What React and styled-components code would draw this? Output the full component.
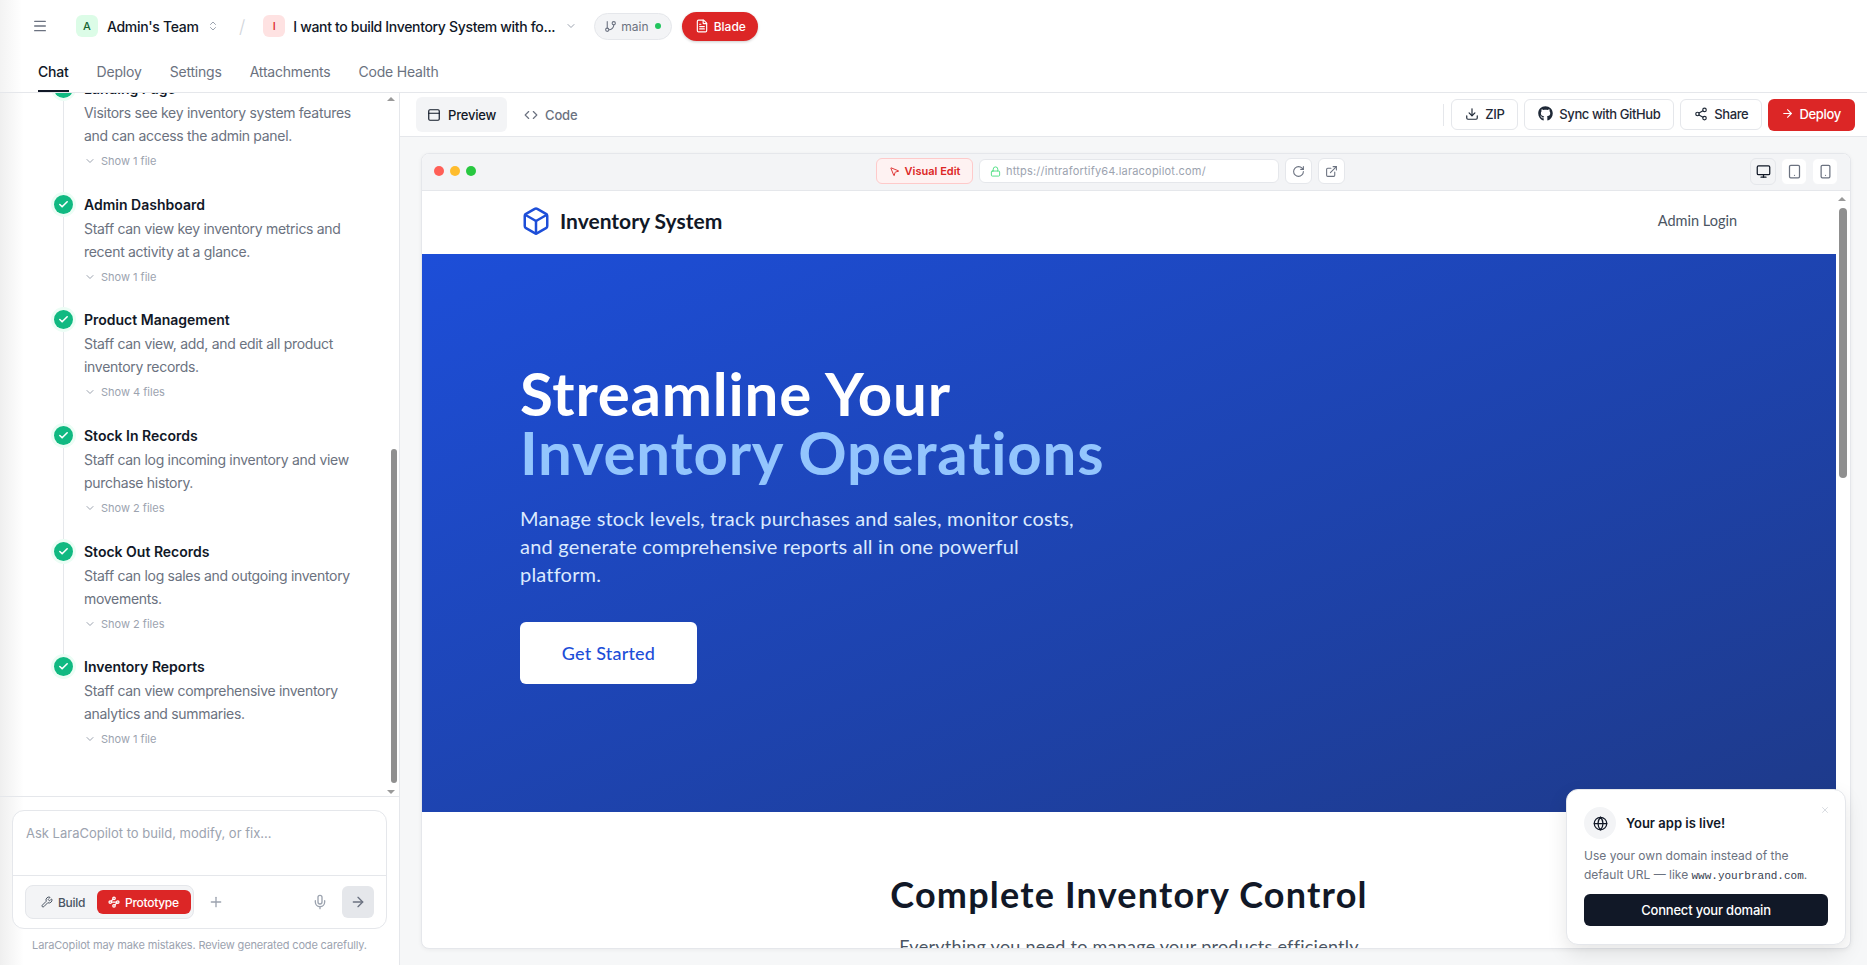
import React from "react";
import styled, { createGlobalStyle } from "styled-components";
import {
  ArrowRight,
  Box,
  Check,
  ChevronDown,
  ChevronsUpDown,
  Code,
  Download,
  ExternalLink,
  FileText,
  GitBranch,
  Globe,
  Lock,
  Menu,
  Mic,
  Monitor,
  MousePointer2,
  PanelTop,
  Plus,
  RotateCw,
  Share2,
  Smartphone,
  Tablet,
  Waypoints,
  Wrench,
  X,
} from "lucide-react";
import { FaGithub } from "react-icons/fa";

const tabs = ["Chat", "Deploy", "Settings", "Attachments", "Code Health"];

const steps = [
  {
    title: "Landing Page",
    text: "Visitors see key inventory system features and can access the admin panel.",
    files: "Show 1 file",
  },
  {
    title: "Admin Dashboard",
    text: "Staff can view key inventory metrics and recent activity at a glance.",
    files: "Show 1 file",
  },
  {
    title: "Product Management",
    text: "Staff can view, add, and edit all product inventory records.",
    files: "Show 4 files",
  },
  {
    title: "Stock In Records",
    text: "Staff can log incoming inventory and view purchase history.",
    files: "Show 2 files",
  },
  {
    title: "Stock Out Records",
    text: "Staff can log sales and outgoing inventory movements.",
    files: "Show 2 files",
  },
  {
    title: "Inventory Reports",
    text: "Staff can view comprehensive inventory analytics and summaries.",
    files: "Show 1 file",
  },
];

const App = () => {
  return (
    <Page>
      <GlobalStyle />
      <TopBar>
        <TopRow>
          <MenuButton>
            <Menu size={16} />
          </MenuButton>
          <Avatar $bg="#dcfce7" $color="#166534">A</Avatar>
          <TeamName>Admin's Team</TeamName>
          <ChevronsUpDown size={12} color="#9ca3af" />
          <Slash>/</Slash>
          <Avatar $bg="#fee2e2" $color="#dc2626">I</Avatar>
          <ProjectName>I want to build Inventory System with fo...</ProjectName>
          <ChevronDown size={12} color="#9ca3af" />
          <BranchPill>
            <GitBranch size={13} />
            main
            <GreenDot />
          </BranchPill>
          <BladePill>
            <FileText size={14} />
            Blade
          </BladePill>
        </TopRow>
        <TabRow>
          {tabs.map((tab, i) => (
            <Tab key={tab} $active={i === 0}>
              {tab}
            </Tab>
          ))}
        </TabRow>
      </TopBar>

      <Main>
        <Sidebar>
          <StepScroll>
            <StepList>
              {steps.map((step, i) => (
                <Step key={step.title} $last={i === steps.length - 1}>
                  <StepDot>
                    <Check size={11} strokeWidth={3.5} color="#fff" />
                  </StepDot>
                  <StepTitle>{step.title}</StepTitle>
                  <StepText>{step.text}</StepText>
                  <ShowFiles>
                    <ChevronDown size={12} />
                    {step.files}
                  </ShowFiles>
                </Step>
              ))}
            </StepList>
            <ChatThumb />
            <ArrowUp $right="4px" $top="4px" />
            <ArrowDown $right="4px" $bottom="2px" />
          </StepScroll>
          <Composer>
            <InputCard>
              <Placeholder>Ask LaraCopilot to build, modify, or fix...</Placeholder>
              <InputFooter>
                <ModeSwitch>
                  <ModeButton>
                    <Wrench size={12} />
                    Build
                  </ModeButton>
                  <ModeButton $active>
                    <Waypoints size={12} strokeWidth={2.5} />
                    Prototype
                  </ModeButton>
                </ModeSwitch>
                <Plus size={16} color="#9ca3af" />
                <Spacer />
                <Mic size={16} color="#9ca3af" />
                <SendButton>
                  <ArrowRight size={16} />
                </SendButton>
              </InputFooter>
            </InputCard>
            <Disclaimer>LaraCopilot may make mistakes. Review generated code carefully.</Disclaimer>
          </Composer>
        </Sidebar>

        <Workspace>
          <Toolbar>
            <ViewTab $active>
              <PanelTop size={14} />
              Preview
            </ViewTab>
            <ViewTab>
              <Code size={14} />
              Code
            </ViewTab>
            <Spacer />
            <ToolDivider />
            <ToolButton>
              <Download size={14} />
              ZIP
            </ToolButton>
            <ToolButton>
              <FaGithub size={15} />
              Sync with GitHub
            </ToolButton>
            <ToolButton>
              <Share2 size={14} />
              Share
            </ToolButton>
            <DeployButton>
              <ArrowRight size={13} />
              Deploy
            </DeployButton>
          </Toolbar>

          <Stage>
            <BrowserFrame>
              <BrowserBar>
                <Lights>
                  <Light $color="#ff5f57" />
                  <Light $color="#febc2e" />
                  <Light $color="#28c840" />
                </Lights>
                <AddressGroup>
                  <VisualEdit>
                    <MousePointer2 size={11} />
                    Visual Edit
                  </VisualEdit>
                  <UrlBox>
                    <Lock size={11} color="#4ade80" />
                    https://intrafortify64.laracopilot.com/
                  </UrlBox>
                  <SmallIconButton>
                    <RotateCw size={13} />
                  </SmallIconButton>
                  <SmallIconButton>
                    <ExternalLink size={13} />
                  </SmallIconButton>
                </AddressGroup>
                <DeviceGroup>
                  <DeviceButton $active>
                    <Monitor size={15} />
                  </DeviceButton>
                  <DeviceButton>
                    <Tablet size={15} />
                  </DeviceButton>
                  <DeviceButton>
                    <Smartphone size={15} />
                  </DeviceButton>
                </DeviceGroup>
              </BrowserBar>

              <Viewport>
                <SiteNav>
                  <Brand>
                    <Box size={30} color="#1d4ed8" strokeWidth={2} />
                    Inventory System
                  </Brand>
                  <NavLink>Admin Login</NavLink>
                </SiteNav>
                <Hero>
                  <HeroTitle>
                    Streamline Your
                    <HeroAccent>Inventory Operations</HeroAccent>
                  </HeroTitle>
                  <HeroText>
                    Manage stock levels, track purchases and sales, monitor costs, and generate
                    comprehensive reports all in one powerful platform.
                  </HeroText>
                  <HeroButton>Get Started</HeroButton>
                </Hero>
                <Features>
                  <FeaturesTitle>Complete Inventory Control</FeaturesTitle>
                  <FeaturesText>Everything you need to manage your products efficiently</FeaturesText>
                </Features>
                <ViewportThumb />
                <ArrowUp $right="4px" $top="6px" />
              </Viewport>
            </BrowserFrame>
          </Stage>

          <Toast>
            <ToastClose>
              <X size={10} />
            </ToastClose>
            <ToastHead>
              <ToastIcon>
                <Globe size={15} />
              </ToastIcon>
              <ToastTitle>Your app is live!</ToastTitle>
            </ToastHead>
            <ToastText>
              Use your own domain instead of the default URL — like{" "}
              <ToastCode>www.yourbrand.com</ToastCode>.
            </ToastText>
            <ToastButton>Connect your domain</ToastButton>
          </Toast>
        </Workspace>
      </Main>
    </Page>
  );
};

const GlobalStyle = createGlobalStyle`
  html, body {
    margin: 0;
    padding: 0;
    height: 100%;
    overflow: hidden;
    background: #fff;
    font-family: Inter, "Open Sans", sans-serif;
  }
  * {
    box-sizing: border-box;
  }
`;

const Page = styled.div`
  width: 1867px;
  height: 965px;
  display: flex;
  flex-direction: column;
  color: #111827;
`;

const TopBar = styled.header`
  height: 93px;
  flex: none;
  border-bottom: 1px solid #e5e7eb;
  background: linear-gradient(90deg, #f3f3f3 0, #fff 22px);
`;

const TopRow = styled.div`
  height: 52px;
  padding-left: 32px;
  display: flex;
  align-items: center;
`;

const MenuButton = styled.span`
  width: 16px;
  display: flex;
  color: #6b7280;
  margin-right: 28px;
`;

const Avatar = styled.span`
  width: 22px;
  height: 22px;
  border-radius: 6px;
  display: flex;
  align-items: center;
  justify-content: center;
  font-size: 11px;
  font-weight: 500;
  background: ${(p) => p.$bg};
  color: ${(p) => p.$color};
`;

const TeamName = styled.span`
  font-size: 14px;
  font-weight: 500;
  letter-spacing: -0.3px;
  margin: 0 10px 0 9px;
  width: 90px;
  white-space: nowrap;
`;

const Slash = styled.span`
  font-size: 18px;
  color: #d1d5db;
  margin: 0 18px 0 20px;
  font-weight: 300;
`;

const ProjectName = styled.span`
  font-size: 14px;
  font-weight: 500;
  letter-spacing: -0.33px;
  margin: 0 8px;
  width: 264px;
  white-space: nowrap;
`;

const BranchPill = styled.span`
  margin-left: 17px;
  height: 27px;
  width: 78px;
  padding: 0 9px;
  display: flex;
  align-items: center;
  gap: 4px;
  border: 1px solid #e5e7eb;
  border-radius: 14px;
  background: #f3f4f6;
  font-size: 12px;
  color: #6b7280;
`;

const GreenDot = styled.span`
  width: 6px;
  height: 6px;
  border-radius: 50%;
  background: #22c55e;
  margin-left: 2px;
`;

const BladePill = styled.span`
  margin-left: 10px;
  height: 29px;
  width: 76px;
  display: flex;
  align-items: center;
  justify-content: center;
  gap: 5px;
  border-radius: 15px;
  background: #dc2626;
  color: #fff;
  font-size: 12px;
  font-weight: 500;
  box-shadow: 0 1px 3px rgba(0, 0, 0, 0.2);
`;

const TabRow = styled.nav`
  height: 40px;
  padding-left: 38px;
  display: flex;
  gap: 28px;
`;

const Tab = styled.span`
  height: 40px;
  padding-top: 11px;
  font-size: 14px;
  letter-spacing: -0.2px;
  color: ${(p) => (p.$active ? "#111827" : "#6b7280")};
  font-weight: ${(p) => (p.$active ? 500 : 400)};
  border-bottom: 2px solid ${(p) => (p.$active ? "#111827" : "transparent")};
`;

const Main = styled.div`
  flex: 1;
  min-height: 0;
  display: flex;
`;

const Sidebar = styled.aside`
  width: 400px;
  flex: none;
  display: flex;
  flex-direction: column;
  border-right: 1px solid #e5e7eb;
  background: linear-gradient(90deg, #efefef 0, #fff 24px);
`;

const StepScroll = styled.div`
  flex: 1;
  min-height: 0;
  position: relative;
  overflow: hidden;
  border-bottom: 1px solid #e5e7eb;
`;

const StepList = styled.div`
  margin-top: -17px;
  padding-left: 54px;
`;

const Step = styled.div`
  position: relative;
  height: 115.7px;
  padding: 0 42px 0 30px;

  &::before {
    content: "";
    display: ${(p) => (p.$last ? "none" : "block")};
    position: absolute;
    left: 9px;
    top: 25px;
    bottom: -3px;
    width: 1px;
    background: #e5e7eb;
  }
`;

const StepDot = styled.span`
  position: absolute;
  left: 0;
  top: 3px;
  width: 19px;
  height: 19px;
  border-radius: 50%;
  background: #10b981;
  display: flex;
  align-items: center;
  justify-content: center;
  box-shadow: 0 0 0 3px #ecfdf5;
`;

const StepTitle = styled.div`
  font-size: 14px;
  font-weight: 600;
  line-height: 25px;
  color: #111827;
`;

const StepText = styled.div`
  font-size: 14px;
  line-height: 23px;
  letter-spacing: -0.3px;
  color: #6b7280;
`;

const ShowFiles = styled.div`
  margin-top: 6px;
  font-size: 11px;
  line-height: 16px;
  color: #9ca3af;
  display: flex;
  align-items: center;
  gap: 5px;
`;

const ChatThumb = styled.div`
  position: absolute;
  right: 2px;
  top: 356px;
  width: 6px;
  height: 334px;
  border-radius: 3px;
  background: #8f8f8f;
`;

const ArrowUp = styled.span`
  position: absolute;
  right: ${(p) => p.$right};
  top: ${(p) => p.$top};
  width: 0;
  height: 0;
  border-left: 4px solid transparent;
  border-right: 4px solid transparent;
  border-bottom: 4px solid #9a9a9a;
`;

const ArrowDown = styled.span`
  position: absolute;
  right: ${(p) => p.$right};
  bottom: ${(p) => p.$bottom};
  width: 0;
  height: 0;
  border-left: 4px solid transparent;
  border-right: 4px solid transparent;
  border-top: 4px solid #9a9a9a;
`;

const Composer = styled.div`
  height: 168px;
  flex: none;
  padding: 13px 12px 0;
`;

const InputCard = styled.div`
  height: 119px;
  border: 1px solid #e5e7eb;
  border-radius: 12px;
  background: #fff;
  display: flex;
  flex-direction: column;
`;

const Placeholder = styled.div`
  height: 65px;
  padding: 12px 13px;
  font-size: 13px;
  line-height: 20px;
  color: #9ca3af;
  border-bottom: 1px solid #e5e7eb;
`;

const InputFooter = styled.div`
  flex: 1;
  display: flex;
  align-items: center;
  padding: 0 12px;
  gap: 14px;
`;

const ModeSwitch = styled.div`
  width: 169px;
  height: 34px;
  display: flex;
  align-items: center;
  padding: 0 3px 0 4px;
  border: 1px solid #e5e7eb;
  border-radius: 8px;
  background: #f3f4f6;
`;

const ModeButton = styled.span`
  height: 24px;
  display: flex;
  align-items: center;
  gap: 5px;
  border-radius: 6px;
  font-size: 12px;
  font-weight: 500;
  letter-spacing: -0.3px;
  padding: 0 12px 0 11px;
  flex: ${(p) => (p.$active ? "1" : "none")};
  background: ${(p) => (p.$active ? "#dc2626" : "transparent")};
  color: ${(p) => (p.$active ? "#fff" : "#4b5563")};
`;

const Spacer = styled.span`
  flex: 1;
`;

const SendButton = styled.span`
  width: 32px;
  height: 32px;
  border-radius: 6px;
  background: #e5e7eb;
  color: #6b7280;
  display: flex;
  align-items: center;
  justify-content: center;
`;

const Disclaimer = styled.div`
  margin-top: 8px;
  text-align: center;
  font-size: 11px;
  line-height: 16px;
  letter-spacing: -0.15px;
  color: #9ca3af;
  white-space: nowrap;
`;

const Workspace = styled.section`
  flex: 1;
  min-width: 0;
  position: relative;
  display: flex;
  flex-direction: column;
  background: #f6f7f8;
`;

const Toolbar = styled.div`
  height: 44px;
  flex: none;
  display: flex;
  align-items: center;
  gap: 6px;
  padding: 0 12px 0 16px;
  background: #fff;
  border-bottom: 1px solid #e5e7eb;
`;

const ViewTab = styled.span`
  height: 35px;
  padding: 0 11px;
  display: flex;
  align-items: center;
  gap: 7px;
  border-radius: 6px;
  font-size: 13px;
  font-weight: 500;
  letter-spacing: -0.2px;
  background: ${(p) => (p.$active ? "#f3f4f6" : "transparent")};
  color: ${(p) => (p.$active ? "#111827" : "#6b7280")};
`;

const ToolDivider = styled.span`
  width: 1px;
  height: 22px;
  background: #e5e7eb;
  margin-right: 1px;
`;

const ToolButton = styled.span`
  height: 31px;
  padding: 0 13px 2px;
  display: flex;
  align-items: center;
  gap: 6px;
  border: 1px solid #e5e7eb;
  border-radius: 6px;
  background: #fff;
  font-size: 13px;
  font-weight: 500;
  letter-spacing: -0.4px;
  color: #1f2937;
`;

const DeployButton = styled.span`
  height: 32px;
  padding: 0 14px 2px 13px;
  display: flex;
  align-items: center;
  gap: 5px;
  border-radius: 6px;
  background: #dc2626;
  color: #fff;
  font-size: 13px;
  font-weight: 500;
  letter-spacing: -0.3px;
`;

const Stage = styled.div`
  flex: 1;
  min-height: 0;
  padding: 16px 16px 16px 21px;
`;

const BrowserFrame = styled.div`
  height: 796px;
  border: 1px solid #e5e7eb;
  border-radius: 8px;
  overflow: hidden;
  background: #fff;
  display: flex;
  flex-direction: column;
  box-shadow: 0 1px 4px rgba(0, 0, 0, 0.05);
`;

const BrowserBar = styled.div`
  height: 37px;
  flex: none;
  position: relative;
  display: flex;
  align-items: center;
  justify-content: space-between;
  padding: 0 12px 2px 12px;
  background: #f3f4f6;
  border-bottom: 1px solid #e5e7eb;
`;

const Lights = styled.div`
  display: flex;
  gap: 6px;
`;

const Light = styled.span`
  width: 10px;
  height: 10px;
  border-radius: 50%;
  background: ${(p) => p.$color};
`;

const AddressGroup = styled.div`
  position: absolute;
  left: 454px;
  top: 4px;
  display: flex;
  align-items: center;
  gap: 6px;
`;

const VisualEdit = styled.span`
  width: 97px;
  height: 26px;
  display: flex;
  align-items: center;
  justify-content: center;
  gap: 5px;
  border: 1px solid #fecaca;
  border-radius: 6px;
  background: #fef2f2;
  color: #dc2626;
  font-size: 11px;
  font-weight: 600;
`;

const UrlBox = styled.span`
  width: 300px;
  height: 24px;
  padding: 0 10px;
  display: flex;
  align-items: center;
  gap: 5px;
  border: 1px solid #e5e7eb;
  border-radius: 6px;
  background: #fff;
  color: #9ca3af;
  font-size: 11px;
  letter-spacing: 0.2px;
`;

const SmallIconButton = styled.span`
  width: 27px;
  height: 26px;
  display: flex;
  align-items: center;
  justify-content: center;
  border: 1px solid #e5e7eb;
  border-radius: 6px;
  background: #fff;
  color: #6b7280;
`;

const DeviceGroup = styled.div`
  display: flex;
  gap: 5px;
`;

const DeviceButton = styled.span`
  width: 26px;
  height: 27px;
  display: flex;
  align-items: center;
  justify-content: center;
  border-radius: 6px;
  border: 1px solid ${(p) => (p.$active ? "#e5e7eb" : "#f3f4f6")};
  background: ${(p) => (p.$active ? "#f3f4f6" : "#fff")};
  color: ${(p) => (p.$active ? "#111827" : "#6b7280")};
`;

const Viewport = styled.div`
  flex: 1;
  min-height: 0;
  position: relative;
  overflow: hidden;
  padding-right: 14px;
  font-family: Lato, sans-serif;
  font-variant-ligatures: none;
`;

const SiteNav = styled.div`
  height: 63px;
  padding: 0 99px 4px 99px;
  display: flex;
  align-items: center;
  justify-content: space-between;
`;

const Brand = styled.div`
  display: flex;
  align-items: center;
  gap: 9px;
  font-size: 21px;
  font-weight: 700;
  color: #111827;
`;

const NavLink = styled.span`
  font-size: 14.5px;
  color: #4b5563;
`;

const Hero = styled.div`
  height: 558px;
  padding: 110px 98px 0;
  background: linear-gradient(to bottom right, #1d4ed8, #1e3a8a);
  color: #fff;
`;

const HeroTitle = styled.h1`
  margin: 0;
  font-size: 60px;
  font-weight: 700;
  line-height: 59px;
  letter-spacing: 0.78px;
`;

const HeroAccent = styled.span`
  display: block;
  color: #93c5fd;
`;

const HeroText = styled.p`
  margin: 22px 0 0;
  width: 570px;
  font-size: 20px;
  line-height: 28px;
  letter-spacing: 0.2px;
  color: #dbeafe;
`;

const HeroButton = styled.span`
  margin-top: 34px;
  width: 177px;
  height: 62px;
  display: flex;
  align-items: center;
  justify-content: center;
  border-radius: 6px;
  background: #fff;
  color: #1d4ed8;
  font-size: 18px;
  font-weight: 500;
  letter-spacing: 0.2px;
`;

const Features = styled.div`
  text-align: center;
  padding-top: 60px;
`;

const FeaturesTitle = styled.h2`
  margin: 0;
  font-size: 36px;
  font-weight: 700;
  line-height: 44px;
  letter-spacing: 1.2px;
  color: #111827;
`;

const FeaturesText = styled.p`
  margin: 16px 0 0;
  font-size: 18px;
  line-height: 28px;
  letter-spacing: 0.25px;
  color: #4b5563;
`;

const ViewportThumb = styled.div`
  position: absolute;
  right: 3px;
  top: 17px;
  width: 8px;
  height: 270px;
  border-radius: 4px;
  background: #8f8f8f;
`;

const Toast = styled.div`
  position: absolute;
  right: 21px;
  bottom: 20px;
  width: 280px;
  height: 156px;
  padding: 17px;
  border: 1px solid #e5e7eb;
  border-radius: 12px;
  background: #fff;
  box-shadow: 0 8px 20px rgba(0, 0, 0, 0.1);
`;

const ToastClose = styled.span`
  position: absolute;
  right: 15px;
  top: 15px;
  color: #d1d5db;
  display: flex;
`;

const ToastHead = styled.div`
  display: flex;
  align-items: center;
  gap: 10px;
`;

const ToastIcon = styled.span`
  width: 32px;
  height: 32px;
  border-radius: 50%;
  background: #f3f4f6;
  display: flex;
  align-items: center;
  justify-content: center;
`;

const ToastTitle = styled.span`
  font-size: 13px;
  font-weight: 600;
  color: #111827;
`;

const ToastText = styled.p`
  margin: 7px 0 0;
  font-size: 12px;
  line-height: 19px;
  color: #6b7280;
`;

const ToastCode = styled.code`
  font-family: "Liberation Mono", monospace;
  font-size: 11px;
  color: #374151;
`;

const ToastButton = styled.div`
  margin-top: 8px;
  height: 32px;
  display: flex;
  align-items: center;
  justify-content: center;
  border-radius: 6px;
  background: #111827;
  color: #fff;
  font-size: 13px;
  font-weight: 500;
  letter-spacing: -0.2px;
`;

export default App;
